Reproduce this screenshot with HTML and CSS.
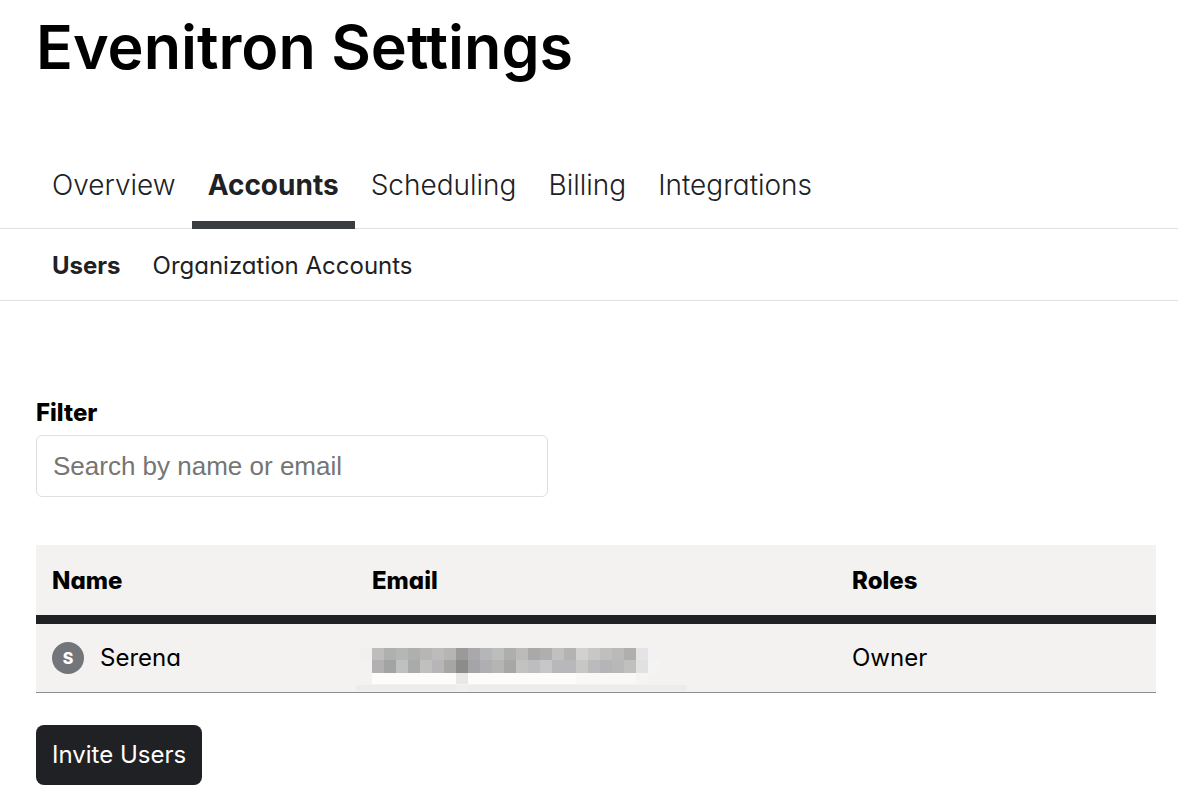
FILE: index.html
```html
<!DOCTYPE html>
<html lang="en">
<head>
    <meta charset="UTF-8">
    <meta name="viewport" content="width=device-width, initial-scale=1.0">
    <title>Evenitron Settings</title>
    <link rel="stylesheet" href="styles.css">
</head>
<body>
    <h1>Evenitron Settings</h1>

    <!-- Main tabs -->
    <nav class="tabs">
        <a href="#overview">Overview</a>
        <a href="#accounts" class="active">Accounts</a>
        <a href="#scheduling">Scheduling</a>
        <a href="#billing">Billing</a>
        <a href="#integrations">Integrations</a>
    </nav>

    <!-- Accounts sub tabs -->
    <nav class="subtabs">
        <a href="#users" class="active">Users</a>
        <a href="#organization">Organization Accounts</a>
    </nav>

    <main>
        <label for="filter">Filter</label>
        <input type="text" id="filter" name="filter" placeholder="Search by name or email">

        <table class="users">
            <thead>
                <tr>
                    <th class="name-col">Name</th>
                    <th class="email-col">Email</th>
                    <th>Roles</th>
                </tr>
            </thead>
            <tbody>
                <tr>
                    <td>
                        <div class="user"><span class="avatar">S</span>Serena</div>
                    </td>
                    <td class="hidden-email">
                        <!-- Pixelated email address -->
                        <svg width="332" height="44" viewBox="0 0 332 44" shape-rendering="crispEdges" aria-hidden="true">
                            <rect x="4" y="0" width="12" height="12" fill="#f0eff1"/>
                            <g transform="translate(16 0)">
                                <rect x="0" width="12" height="12" fill="#bdbdbc"/>
                                <rect x="12" width="12" height="12" fill="#b0b0ae"/>
                                <rect x="24" width="12" height="12" fill="#b5b6b8"/>
                                <rect x="36" width="12" height="12" fill="#afafad"/>
                                <rect x="48" width="12" height="12" fill="#b6b6b4"/>
                                <rect x="60" width="12" height="12" fill="#bcbcbb"/>
                                <rect x="72" width="12" height="12" fill="#b5b5b3"/>
                                <rect x="84" width="12" height="12" fill="#9a9a98"/>
                                <rect x="96" width="12" height="12" fill="#a9a9ab"/>
                                <rect x="108" width="12" height="12" fill="#b6b5b8"/>
                                <rect x="120" width="12" height="12" fill="#bcbdbf"/>
                                <rect x="132" width="12" height="12" fill="#aeaeac"/>
                                <rect x="144" width="12" height="12" fill="#bbbbb9"/>
                                <rect x="156" width="12" height="12" fill="#a9a9a8"/>
                                <rect x="168" width="12" height="12" fill="#afaeb1"/>
                                <rect x="180" width="12" height="12" fill="#c0c0bf"/>
                                <rect x="192" width="12" height="12" fill="#b3b3b1"/>
                                <rect x="204" width="12" height="12" fill="#d1d1d0"/>
                                <rect x="216" width="12" height="12" fill="#c8c7c5"/>
                                <rect x="228" width="12" height="12" fill="#bfbfbe"/>
                                <rect x="240" width="12" height="12" fill="#bababa"/>
                                <rect x="252" width="12" height="12" fill="#afafae"/>
                                <rect x="264" width="12" height="12" fill="#e4e3e5"/>
                                <rect x="276" width="12" height="12" fill="#f2f1f3"/>
                            </g>
                            <g transform="translate(16 12)">
                                <rect x="0" width="12" height="13" fill="#b2b0b2"/>
                                <rect x="12" width="12" height="13" fill="#a2a3a3"/>
                                <rect x="24" width="12" height="13" fill="#c0c0be"/>
                                <rect x="36" width="12" height="13" fill="#a9aaaa"/>
                                <rect x="48" width="12" height="13" fill="#c0c0bf"/>
                                <rect x="60" width="12" height="13" fill="#b7b5b8"/>
                                <rect x="72" width="12" height="13" fill="#a6a6a4"/>
                                <rect x="84" width="12" height="13" fill="#8c8c8b"/>
                                <rect x="96" width="12" height="13" fill="#a5a5a7"/>
                                <rect x="108" width="12" height="13" fill="#afafb1"/>
                                <rect x="120" width="12" height="13" fill="#b5b5b3"/>
                                <rect x="132" width="12" height="13" fill="#a7a7a5"/>
                                <rect x="144" width="12" height="13" fill="#c2c2c1"/>
                                <rect x="156" width="12" height="13" fill="#bdbcbf"/>
                                <rect x="168" width="12" height="13" fill="#c7c6c9"/>
                                <rect x="180" width="24" height="13" fill="#b8b7b9"/>
                                <rect x="204" width="12" height="13" fill="#c7c7c6"/>
                                <rect x="216" width="12" height="13" fill="#bbbabc"/>
                                <rect x="228" width="12" height="13" fill="#b5b4b6"/>
                                <rect x="240" width="12" height="13" fill="#b8b8b8"/>
                                <rect x="252" width="12" height="13" fill="#c0c0bf"/>
                                <rect x="264" width="12" height="13" fill="#e2e1e1"/>
                                <rect x="276" width="12" height="13" fill="#f5f4f3"/>
                            </g>
                            <rect x="16" y="25" width="84" height="11" fill="#fdfcfb"/>
                            <rect x="100" y="25" width="12" height="11" fill="#e8e8e7"/>
                            <rect x="112" y="25" width="108" height="11" fill="#fdfcfb"/>
                            <rect x="220" y="25" width="60" height="11" fill="#f9f8f7"/>
                            <rect x="280" y="25" width="12" height="11" fill="#f5f4f3"/>
                            <rect x="0" y="37" width="331" height="6" fill="#ececeb"/>
                            <rect x="100" y="37" width="12" height="6" fill="#efeeef"/>
                        </svg>
                    </td>
                    <td>Owner</td>
                </tr>
            </tbody>
        </table>

        <button type="button">Invite Users</button>
    </main>
</body>
</html>
```
FILE: styles.css
```css
body {
    font-family: 'Inter', sans-serif;
    font-feature-settings: 'cv11';
    font-size: 24px;
    line-height: 32px;
    background-color: #fff;
    color: #000;
    margin: 0;
}

h1 {
    margin: 0;
    padding: 7px 36px 1px;
    font-size: 61px;
    line-height: 80px;
    font-weight: 600;
}

.tabs, .subtabs {
    display: flex;
    padding: 0 36px;
    border-bottom: 1px solid #dfdfe0;
}

.tabs {
    margin-top: 56px;
    font-size: 28px;
    font-weight: 300;
}

.tabs a, .subtabs a {
    color: #202124;
    text-decoration: none;
    padding: 21px 16px 18px;
}

.tabs a {
    padding: 25px 16px 27px;
}

.tabs .active {
    font-weight: 700;
    padding-bottom: 20px;
    border-bottom: 8px solid #3a3d41;
    margin-bottom: -1px;
}

.subtabs .active {
    font-weight: 700;
}

main {
    padding: 96px 22px 0 36px;
}

label {
    display: block;
    margin-bottom: 6px;
    font-weight: 800;
}

input {
    display: block;
    width: 512px;
    max-width: 100%;
    height: 62px;
    padding: 0 16px;
    box-sizing: border-box;
    border: 1px solid #dfdfe0;
    border-radius: 6px;
    font-family: 'Liberation Sans', Arial, sans-serif;
    font-size: 26px;
}

input::placeholder {
    color: #757575;
}

.users {
    width: 100%;
    margin-top: 48px;
    border-collapse: separate;
    border-spacing: 0;
    table-layout: fixed;
    background-color: #f3f2f0;
}

.users th, .users td {
    padding: 18px 16px;
    text-align: left;
}

.users th {
    padding: 20px 16px 18px;
    font-weight: 800;
    border-bottom: 9px solid #202124;
}

.users td {
    border-bottom: 1px solid #8c8c8c;
}

.name-col {
    width: 28.57%;
    box-sizing: border-box;
}

.email-col {
    width: 42.86%;
    box-sizing: border-box;
}

.users .hidden-email {
    padding: 0;
    vertical-align: bottom;
}

.hidden-email svg {
    display: block;
}

.user {
    display: flex;
    align-items: center;
    gap: 16px;
}

.avatar {
    width: 32px;
    height: 32px;
    border-radius: 50%;
    background-color: #72767a;
    color: #fff;
    font-size: 16px;
    font-weight: 800;
    text-align: center;
}

button {
    margin-top: 32px;
    padding: 14px 16px;
    border: none;
    border-radius: 8px;
    background-color: #202124;
    color: #fff;
    font: inherit;
    font-feature-settings: inherit;
    cursor: pointer;
}
```
